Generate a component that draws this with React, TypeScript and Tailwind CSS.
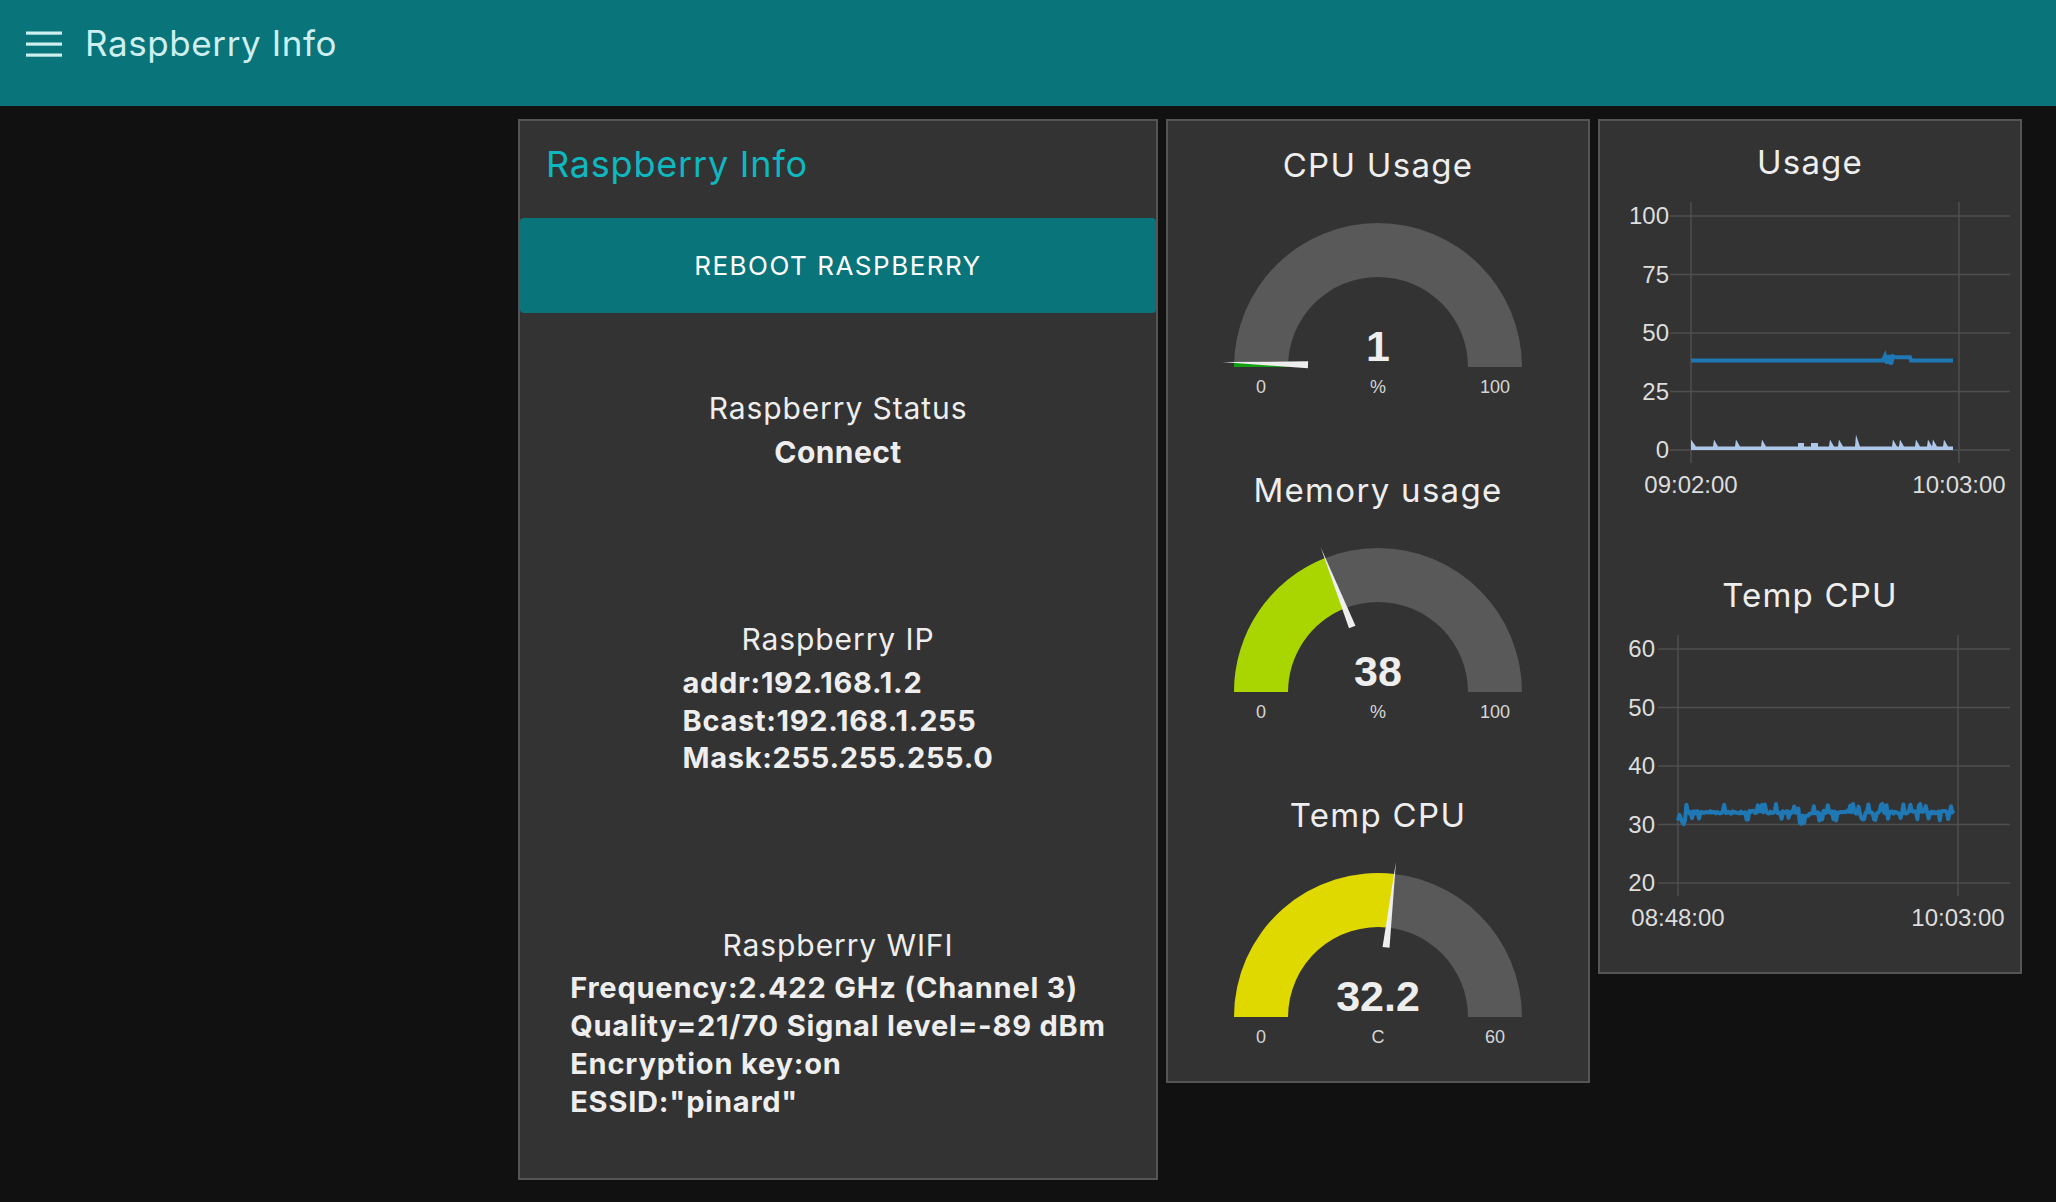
import React from 'react';

const sans = "font-['Inter','Noto_Sans',sans-serif]";

function rng(seed: number) {
    let s = seed;
    return () => {
        s = (s * 1103515245 + 12345) % 2147483648;
        return s / 2147483648;
    };
}

type GaugeProps = {
    title: string;
    value: number;
    min: number;
    max: number;
    unit: string;
    color: string;
    text: string;
};

function Gauge({ title, value, min, max, unit, color, text }: GaugeProps) {
    const cx = 210;
    const cy = 182;
    const R = 144;
    const r = 90;
    const a = ((value - min) / (max - min)) * Math.PI;
    const pt = (rad: number) => [cx - rad * Math.cos(a), cy - rad * Math.sin(a)];
    const [ox, oy] = pt(R);
    const [ix, iy] = pt(r);
    const bg = `M ${cx - R} ${cy} A ${R} ${R} 0 0 1 ${cx + R} ${cy} L ${cx + r} ${cy} A ${r} ${r} 0 0 0 ${cx - r} ${cy} Z`;
    const fill = `M ${cx - R} ${cy} A ${R} ${R} 0 0 1 ${ox} ${oy} L ${ix} ${iy} A ${r} ${r} 0 0 0 ${cx - r} ${cy} Z`;

    // needle
    const [tx, ty] = pt(156);
    const [bx, by] = pt(70);
    const px = Math.sin(a) * 3.5;
    const py = -Math.cos(a) * 3.5;
    const needle = `${tx},${ty} ${bx + px},${by + py} ${bx - px},${by - py}`;

    return (
        <div className="flex h-[325px] flex-col items-center">
            <div className={`mt-[24px] h-[40px] text-[33px] leading-[40px] tracking-[1.3px] text-[#eeeeee] ${sans}`}>
                {title}
            </div>
            <svg width="420" height="220" viewBox="0 0 420 220" className="block">
                <path d={bg} fill="#595959" />
                <path d={fill} fill={color} />
                <polygon points={needle} fill="#eeeeee" />
                <g fontFamily="'Liberation Sans', Arial, sans-serif">
                    <text x={cx} y={cy - 6} textAnchor="middle" fontSize="43" fontWeight="bold" fill="#eeeeee">
                        {text}
                    </text>
                    <text x={cx - 117} y={cy + 26} textAnchor="middle" fontSize="18" fill="#d6d6d6">
                        {min}
                    </text>
                    <text x={cx} y={cy + 26} textAnchor="middle" fontSize="18" fill="#d6d6d6">
                        {unit}
                    </text>
                    <text x={cx + 117} y={cy + 26} textAnchor="middle" fontSize="18" fill="#d6d6d6">
                        {max}
                    </text>
                </g>
            </svg>
        </div>
    );
}

type ChartProps = {
    title: string;
    ticks: number[];
    yMin: number;
    yMax: number;
    labelX: number;
    gridX: number;
    leftX: number;
    rightX: number;
    xLabels: [string, string];
    children: (y: (v: number) => number) => React.ReactNode;
};

function Chart({ title, ticks, yMin, yMax, labelX, gridX, leftX, rightX, xLabels, children }: ChartProps) {
    const top = 34;
    const bottom = 268;
    const y = (v: number) => bottom - ((v - yMin) / (yMax - yMin)) * (bottom - top);
    return (
        <div className="flex flex-col items-center">
            <div className={`mt-[21px] h-[40px] text-[33px] leading-[40px] tracking-[1.2px] text-[#eeeeee] ${sans}`}>
                {title}
            </div>
            <svg width="420" height="325" viewBox="0 0 420 325" className="block">
                <g stroke="#4f4f4f" strokeWidth="1.5">
                    {ticks.map((t) => (
                        <line key={t} x1={gridX} x2={410} y1={y(t)} y2={y(t)} />
                    ))}
                    <line x1={leftX} x2={leftX} y1={20} y2={281} />
                    <line x1={rightX} x2={rightX} y1={20} y2={281} />
                </g>
                <g fontFamily="'Liberation Sans', Arial, sans-serif" fontSize="24" fill="#dddddd">
                    {ticks.map((t) => (
                        <text key={t} x={labelX} y={y(t) + 8} textAnchor="end">
                            {t}
                        </text>
                    ))}
                    <text x={leftX} y={311} textAnchor="middle">
                        {xLabels[0]}
                    </text>
                    <text x={rightX} y={311} textAnchor="middle">
                        {xLabels[1]}
                    </text>
                </g>
                {children(y)}
            </svg>
        </div>
    );
}

function UsageSeries(y: (v: number) => number) {
    const mem: [number, number][] = [
        [91, 38.3], [283, 38.3], [285, 40.2], [287, 37], [289, 40.5], [291, 36.6], [293, 40], [295, 39.6],
        [310, 39.6], [311, 38.3], [353, 38.3],
    ];
    const spikes = [113, 135, 161, 229, 238, 255, 292, 299, 315, 327, 332, 343];
    const pts: string[] = [`91,${y(0)}`, `91,${y(4.5)}`, `96,${y(1.5)}`];
    for (const s of spikes) {
        pts.push(`${s},${y(1.5)}`);
        pts.push(`${s + 1},${y(s === 255 ? 6.5 : 4.5)}`);
        pts.push(`${s + 5},${y(1.5)}`);
        if (s === 161) {
            pts.push(`198,${y(1.5)}`, `198,${y(3)}`, `204,${y(3)}`, `204,${y(1.5)}`);
            pts.push(`211,${y(1.5)}`, `211,${y(3)}`, `218,${y(3)}`, `218,${y(1.5)}`);
        }
    }
    pts.push(`353,${y(1.5)}`, `353,${y(0)}`);
    return (
        <g>
            <polygon points={pts.join(' ')} fill="#aec7e8" />
            <polyline
                points={mem.map(([px, v]) => `${px},${y(v)}`).join(' ')}
                fill="none"
                stroke="#1f77b4"
                strokeWidth="4"
            />
        </g>
    );
}

function TempSeries(y: (v: number) => number) {
    const rand = rng(7);
    const pts: string[] = [];
    for (let x = 78; x <= 355; x += 1.4) {
        let v = 32.1 + (rand() - 0.5) * 0.5;
        if (x < 84) v = 31.2 + (rand() - 0.5) * 2.6;
        if (x > 195 && x < 212) v -= Math.sin(((x - 195) / 17) * Math.PI) * 0.7;
        const k = rand();
        if (k > 0.88) v += 1.2;
        else if (k < 0.12) v -= 1.2;
        pts.push(`${x.toFixed(1)},${y(v).toFixed(1)}`);
    }
    return <polyline points={pts.join(' ')} fill="none" stroke="#1f77b4" strokeWidth="4" strokeLinejoin="round" />;
}

export default function App() {
    return (
        <div className={`h-[1202px] w-[2056px] overflow-hidden bg-[#111111] ${sans}`}>
            {/* toolbar */}
            <div className="h-[106px] bg-[#097479] pt-[21px]">
                <div className="flex h-[44px] items-center gap-[23px] pl-[26px]">
                    <svg width="36" height="26" viewBox="0 0 36 26" className="mt-[2px]">
                        <rect x="0" y="0.5" width="36" height="3.2" fill="#cdeff0" />
                        <rect x="0" y="11.5" width="36" height="3.2" fill="#cdeff0" />
                        <rect x="0" y="22.5" width="36" height="3.2" fill="#cdeff0" />
                    </svg>
                    <span className="text-[35px] leading-[44px] tracking-[0.6px] text-[#cdeff0]">Raspberry Info</span>
                </div>
            </div>

            <div className="flex items-start gap-[8px] pl-[518px] pt-[13px]">
                {/* info group */}
                <div className="h-[1061px] w-[640px] border-2 border-[#555555] bg-[#333333]">
                    <div className="h-[97px] pl-[26px] pt-[21px] text-[36px] leading-[44px] tracking-[0.8px] text-[#0eb8c0]">
                        Raspberry Info
                    </div>
                    <button className="flex h-[95px] w-full items-center justify-center rounded-[4px] bg-[#097479] text-[26px] tracking-[1.5px] text-white">
                        REBOOT RASPBERRY
                    </button>

                    <div className="mt-[73px] text-center text-[#eeeeee]">
                        <div className="text-[30px] leading-[44px] tracking-[0.9px]">Raspberry Status</div>
                        <div className="text-[30px] font-bold leading-[44px] tracking-[0.4px]">Connect</div>
                    </div>

                    <div className="mt-[143px] text-center text-[#eeeeee]">
                        <div className="text-[30px] leading-[44px] tracking-[0.9px]">Raspberry IP</div>
                        <div className="mt-[3px] inline-block text-left text-[29px] font-bold leading-[37.5px] tracking-[0.7px]">
                            <div>addr:192.168.1.2</div>
                            <div>Bcast:192.168.1.255</div>
                            <div>Mask:255.255.255.0</div>
                        </div>
                    </div>

                    <div className="mt-[146px] text-center text-[#eeeeee]">
                        <div className="text-[30px] leading-[44px] tracking-[0.9px]">Raspberry WIFI</div>
                        <div className="mt-[2px] inline-block text-left text-[29px] font-bold leading-[38px] tracking-[0.8px]">
                            <div>Frequency:2.422 GHz (Channel 3)</div>
                            <div>Quality=21/70 Signal level=-89 dBm</div>
                            <div>Encryption key:on</div>
                            <div>ESSID:"pinard"</div>
                        </div>
                    </div>
                </div>

                {/* gauges */}
                <div className="h-[964px] w-[424px] overflow-hidden border-2 border-[#555555] bg-[#333333]">
                    <Gauge title="CPU Usage" value={1} min={0} max={100} unit="%" color="#12a012" text="1" />
                    <Gauge title="Memory usage" value={38} min={0} max={100} unit="%" color="#a9d600" text="38" />
                    <Gauge title="Temp CPU" value={32.2} min={0} max={60} unit="C" color="#dfd900" text="32.2" />
                </div>

                {/* charts */}
                <div className="h-[855px] w-[424px] overflow-hidden border-2 border-[#555555] bg-[#333333]">
                    <div className="h-[433px]">
                        <Chart
                            title="Usage"
                            ticks={[0, 25, 50, 75, 100]}
                            yMin={0}
                            yMax={100}
                            labelX={69}
                            gridX={70}
                            leftX={91}
                            rightX={359}
                            xLabels={['09:02:00', '10:03:00']}
                        >
                            {UsageSeries}
                        </Chart>
                    </div>
                    <Chart
                        title="Temp CPU"
                        ticks={[20, 30, 40, 50, 60]}
                        yMin={20}
                        yMax={60}
                        labelX={55}
                        gridX={58}
                        leftX={78}
                        rightX={358}
                        xLabels={['08:48:00', '10:03:00']}
                    >
                        {TempSeries}
                    </Chart>
                </div>
            </div>
        </div>
    );
}
